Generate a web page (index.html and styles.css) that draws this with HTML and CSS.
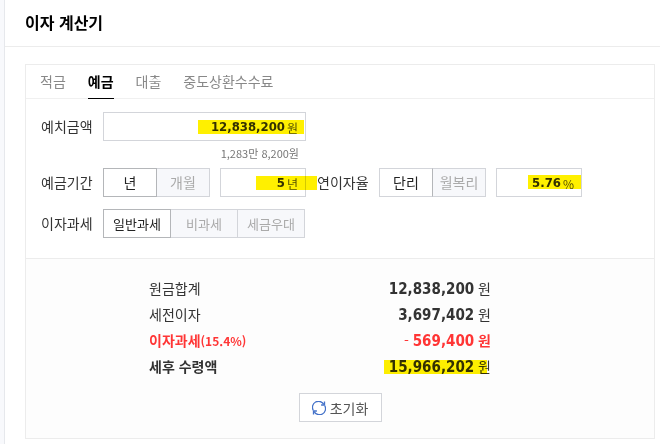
FILE: index.html
```html
<!DOCTYPE html>
<html lang="ko">
<head>
    <meta charset="UTF-8">
    <meta name="viewport" content="width=device-width, initial-scale=1.0">
    <title>이자 계산기</title>
    <link rel="stylesheet" href="styles.css">
</head>
<body>
    <section class="calculator">
        <header class="calculator-header">
            <h1>이자 계산기</h1>
        </header>

        <form class="card">
            <!-- Tabs -->
            <nav class="tabs">
                <a href="#savings">적금</a>
                <a href="#deposit" class="active" aria-current="page">예금</a>
                <a href="#loan">대출</a>
                <a href="#fee">중도상환수수료</a>
            </nav>

            <!-- Conditions -->
            <div class="fields">
                <div class="row">
                    <label class="row-label" for="amount">예치금액</label>
                    <div class="amount-group">
                        <div class="field mark mark-amount">
                            <input type="text" id="amount" name="amount" value="12,838,200">
                            <span class="unit">원</span>
                        </div>
                        <p class="hint">1,283만 8,200원</p>
                    </div>
                </div>

                <div class="row">
                    <label class="row-label" for="period">예금기간</label>
                    <div class="control-group">
                        <div class="segment" role="radiogroup" aria-label="예금기간 단위">
                            <input type="radio" id="year" name="periodUnit" checked>
                            <label for="year">년</label>
                            <input type="radio" id="month" name="periodUnit">
                            <label for="month">개월</label>
                        </div>
                        <div class="field field-small mark mark-period">
                            <input type="text" id="period" name="period" value="5">
                            <span class="unit">년</span>
                        </div>
                    </div>
                    <label class="row-label rate-label" for="rate">연이자율</label>
                    <div class="control-group">
                        <div class="segment segment-plain" role="radiogroup" aria-label="이자 방식">
                            <input type="radio" id="simple" name="rateType" checked>
                            <label for="simple">단리</label>
                            <input type="radio" id="compound" name="rateType">
                            <label for="compound">월복리</label>
                        </div>
                        <div class="field field-small mark mark-rate">
                            <input type="text" id="rate" name="rate" value="5.76">
                            <span class="unit">%</span>
                        </div>
                    </div>
                </div>

                <div class="row">
                    <span class="row-label" id="tax-label">이자과세</span>
                    <div class="segment segment-wide" role="radiogroup" aria-labelledby="tax-label">
                        <input type="radio" id="taxNormal" name="tax" checked>
                        <label for="taxNormal">일반과세</label>
                        <input type="radio" id="taxFree" name="tax">
                        <label for="taxFree">비과세</label>
                        <input type="radio" id="taxReduced" name="tax">
                        <label for="taxReduced">세금우대</label>
                    </div>
                </div>
            </div>

            <!-- Results -->
            <div class="results">
                <dl class="result-list">
                    <div class="result">
                        <dt>원금합계</dt>
                        <dd><strong>12,838,200</strong> 원</dd>
                    </div>
                    <div class="result">
                        <dt>세전이자</dt>
                        <dd><strong>3,697,402</strong> 원</dd>
                    </div>
                    <div class="result result-tax">
                        <dt>이자과세<span class="tax-rate">(15.4%)</span></dt>
                        <dd><span class="minus">-</span> <strong>569,400</strong> 원</dd>
                    </div>
                    <div class="result result-total">
                        <dt>세후 수령액</dt>
                        <dd class="mark mark-total"><strong>15,966,202</strong> 원</dd>
                    </div>
                </dl>

                <button type="reset" class="reset-btn">
                    <svg class="reset-icon" viewBox="0 0 14 14" aria-hidden="true">
                        <path d="M1.2 9.2A6 6 0 0 1 11.8 3.4M12.8 4.8A6 6 0 0 1 2.2 10.6"/>
                        <path d="M12.5 0.6V4H9.1M1.5 13.4V10H4.9"/>
                    </svg>
                    초기화
                </button>
            </div>
        </form>
    </section>
</body>
</html>
```

FILE: styles.css
```css
/* Base Styles */
* {
    box-sizing: border-box;
}

body {
    margin: 0;
    padding-left: 4px;
    background-color: #f8f9fc;
    color: #333;
    font-family: "Noto Sans CJK KR", sans-serif;
    font-size: 14px;
    line-height: 20px;
}

.calculator {
    min-height: 100vh;
    background-color: #fff;
    border-left: 1px solid #e6e8ec;
}

.calculator-header {
    padding: 10px 20px 12px;
    border-bottom: 1px solid #ececec;
}

h1 {
    margin: 0;
    font-size: 16px;
    font-weight: 700;
    line-height: 24px;
    color: #000;
}

.card {
    margin: 17px 5px 0 20px;
    border: 1px solid #ececec;
}

/* Tabs */
.tabs {
    display: flex;
    gap: 22px;
    padding: 0 14px;
    border-bottom: 1px solid #f0f0f0;
}

.tabs a {
    margin-bottom: -1px;
    padding: 6px 0 7px;
    border-bottom: 1px solid transparent;
    color: #888;
    text-decoration: none;
}

.tabs .active {
    border-color: #000;
    color: #000;
    font-weight: 700;
}

/* Conditions */
.fields {
    display: flex;
    flex-direction: column;
    gap: 12px;
    padding: 13px 15px 20px;
}

.row {
    display: flex;
    align-items: flex-start;
}

.row-label {
    flex: none;
    width: 62px;
    line-height: 29px;
}

.rate-label {
    margin-left: 11px;
}

.amount-group {
    width: 203px;
}

.control-group {
    display: flex;
    gap: 10px;
}

.field {
    display: flex;
    height: 29px;
    padding-right: 7px;
    border: 1px solid #d3d5da;
    background-color: #fff;
}

.field-small {
    width: 86px;
}

.field input {
    flex: 1;
    min-width: 0;
    padding: 0 2px 0 0;
    border: 0;
    outline: 0;
    background: none;
    color: #333;
    font-family: "DejaVu Sans Condensed", "DejaVu Sans", sans-serif;
    font-size: 13px;
    font-weight: 700;
    text-align: right;
}

.unit {
    font-size: 12px;
    line-height: 29px;
    color: #555;
}

.hint {
    margin: 6px 7px -3px 0;
    font-size: 11px;
    line-height: 12px;
    text-align: right;
    color: #777;
}

/* Segmented radio buttons */
.segment {
    display: flex;
    position: relative;
    width: 107px;
}

.segment-wide {
    width: 202px;
    font-size: 13px;
}

.segment input {
    position: absolute;
    opacity: 0;
}

.segment label {
    flex: 1;
    height: 29px;
    border: 1px solid #d3d5da;
    background-color: #f7f8fb;
    line-height: 27px;
    text-align: center;
    color: #aaa;
}

.segment label + input + label {
    margin-left: -1px;
}

.segment input:checked + label {
    z-index: 1;
    border-color: #b4b6b9;
    background-color: #fff;
    color: #222;
}

.segment-plain input:checked + label {
    border-color: #d3d5da;
    border-right-color: #b4b6b9;
}

/* Highlighter strokes */
.mark {
    position: relative;
}

.mark::after {
    content: "";
    position: absolute;
    z-index: 2;
    height: 14px;
    background-color: #fff000;
    mix-blend-mode: multiply;
    pointer-events: none;
}

.mark-amount::after {
    top: 7px;
    right: 1px;
    width: 106px;
}

.mark-period::after {
    top: 7px;
    right: -12px;
    width: 61px;
}

.mark-rate::after {
    top: 6px;
    right: 0;
    width: 53px;
}

.mark-total::after {
    top: 7px;
    right: 4px;
    width: 103px;
}

/* Results */
.results {
    padding: 16px 20px;
    border-top: 1px solid #ececec;
    background-color: #fdfdfd;
}

.result-list {
    max-width: 382px;
    margin: 0 auto 14px;
    padding-right: 40px;
}

.result {
    display: flex;
    justify-content: space-between;
    height: 26px;
    line-height: 26px;
}

.result dd {
    margin: 0;
}

.result strong {
    font-family: "DejaVu Sans Condensed", "DejaVu Sans", sans-serif;
    font-size: 15px;
    line-height: 20px;
}

.result-tax {
    color: #ff3535;
}

.result-tax dt,
.result-tax dd,
.result-total dt {
    font-weight: 700;
}

.tax-rate {
    font-size: 12px;
    line-height: 20px;
}

.minus {
    font-weight: 400;
}

.reset-btn {
    display: flex;
    align-items: center;
    justify-content: center;
    gap: 4px;
    width: 83px;
    height: 29px;
    margin: 0 auto;
    padding: 0;
    border: 1px solid #d3d5da;
    background-color: #fff;
    color: #555;
    font-family: inherit;
    font-size: 14px;
    cursor: pointer;
}

.reset-icon {
    width: 14px;
    height: 14px;
    fill: none;
    stroke: #4472c9;
    stroke-width: 1.3;
}
```
